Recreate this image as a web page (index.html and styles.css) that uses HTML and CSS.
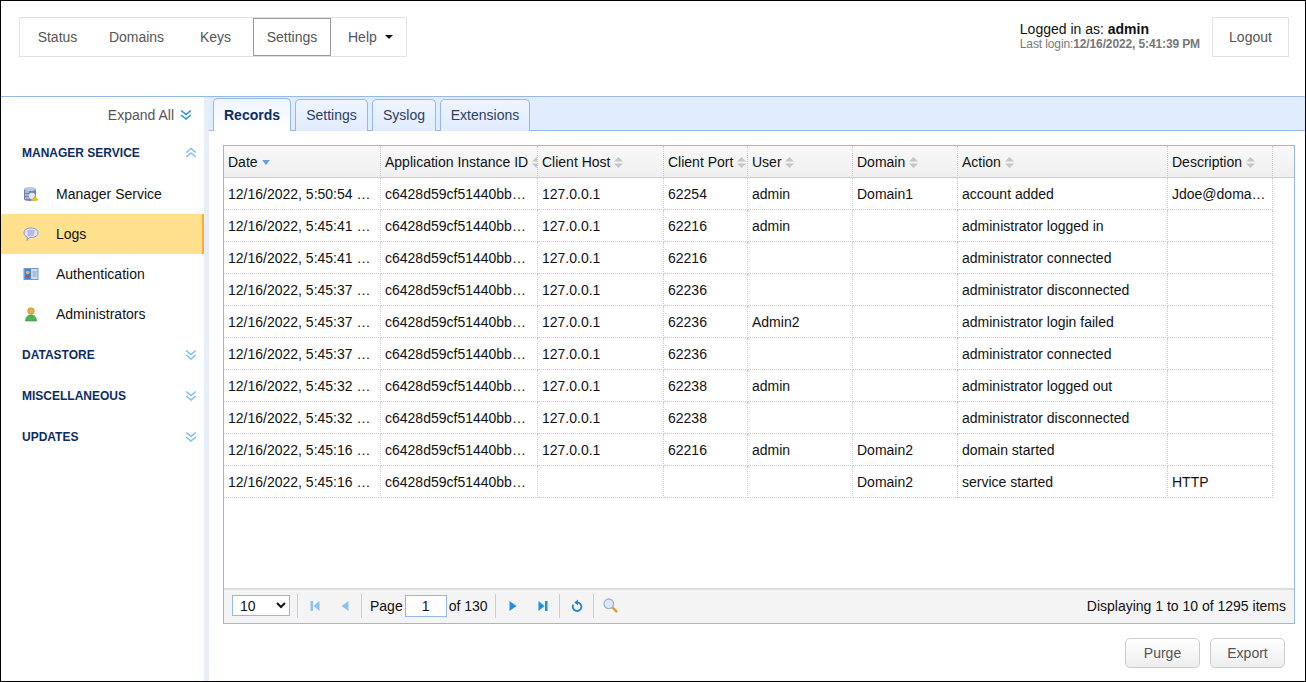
FILE: index.html
```html
<!DOCTYPE html>
<html lang="en">
<head>
<meta charset="utf-8">
<title>Logs</title>
<link rel="stylesheet" href="styles.css">
</head>
<body>
<div class="app">
  <header class="top">
    <nav class="nav">
      <a class="nav-item w-status">Status</a>
      <a class="nav-item w-domains">Domains</a>
      <a class="nav-item w-keys">Keys</a>
      <a class="nav-item w-settings is-current">Settings</a>
      <a class="nav-item w-help">Help<span class="caret"></span></a>
    </nav>
    <div class="account">
      <div class="who">
        <div class="who-line">Logged in as: <b>admin</b></div>
        <div class="last-line">Last login:<b>12/16/2022, 5:41:39 PM</b></div>
      </div>
      <a class="logout">Logout</a>
    </div>
  </header>
  <div class="body">
    <aside class="side">
      <div class="expand">Expand All
        <svg width="12" height="12" viewBox="0 0 12 12"><path d="M1.200 1.500 6 5.500l4.800-4M1.200 6 6 10l4.800-4" fill="none" stroke="#2c8fe0" stroke-width="1.600"/></svg>
      </div>
      <div class="sec sec-first">MANAGER SERVICE
        <svg width="12" height="12" viewBox="0 0 12 12"><path d="M1.200 5.500 6 1.500l4.800 4M1.200 10 6 6l4.800 4" fill="none" stroke="#7fbdf0" stroke-width="1.500"/></svg>
      </div>
      <a class="side-item">
        <svg class="side-icon" width="16" height="16" viewBox="0 0 16 16"><path d="M1 3v10c0 1 2 2 6 2s6-1 6-2V3z" fill="#6f86b4"/><ellipse cx="7" cy="3" rx="6" ry="2" fill="#bcc8e0"/><path d="M2 6h4M2 9h4M2 12h4" stroke="#dfe7f5"/><circle cx="9" cy="10" r="3.200" fill="#e3e8f1"/><path d="M8 14.500l3.500-4.500 4 3.500-2 1.500z" fill="#e6bf25"/></svg>
        Manager Service</a>
      <a class="side-item is-active">
        <svg class="side-icon" width="16" height="16" viewBox="0 0 16 16"><path d="M8 2c4 0 7 1.800 7 4.800S12 11.500 8 11.500H6.500L4 14.500l.4-3.500C2.200 10.400 1 8.900 1 6.800 1 3.800 4 2 8 2z" fill="#dfe2f8" stroke="#9096d6"/><path d="M4.500 5h7M4.500 7h7M4.500 9h6" stroke="#8c92d2"/></svg>
        Logs</a>
      <a class="side-item">
        <svg class="side-icon" width="16" height="16" viewBox="0 0 16 16"><rect x="1" y="2.500" width="14" height="11" fill="#cfdcf0" stroke="#6f9bd0"/><rect x="1.500" y="3" width="6.500" height="10" fill="#3f86d8"/><circle cx="4.700" cy="6.500" r="1.800" fill="#f0b070"/><path d="M2.500 11.500c0-2 1-3 2.200-3s2.200 1 2.200 3z" fill="#c0503a"/><path d="M9.500 6h4M9.500 8h4M9.500 10h4" stroke="#8e9cb4"/></svg>
        Authentication</a>
      <a class="side-item">
        <svg class="side-icon" width="16" height="16" viewBox="0 0 16 16"><circle cx="8" cy="5" r="3.300" fill="#e4b04c" stroke="#b58632" stroke-width=".6"/><path d="M2.500 15c0-4 2.200-6 5.500-6s5.500 2 5.500 6z" fill="#4cb64c" stroke="#2f8f35" stroke-width=".6"/></svg>
        Administrators</a>
      <div class="sec">DATASTORE
        <svg width="12" height="12" viewBox="0 0 12 12"><path d="M1.200 1.500 6 5.500l4.800-4M1.200 6 6 10l4.800-4" fill="none" stroke="#7fbdf0" stroke-width="1.500"/></svg>
      </div>
      <div class="sec">MISCELLANEOUS
        <svg width="12" height="12" viewBox="0 0 12 12"><path d="M1.200 1.500 6 5.500l4.800-4M1.200 6 6 10l4.800-4" fill="none" stroke="#7fbdf0" stroke-width="1.500"/></svg>
      </div>
      <div class="sec">UPDATES
        <svg width="12" height="12" viewBox="0 0 12 12"><path d="M1.200 1.500 6 5.500l4.800-4M1.200 6 6 10l4.800-4" fill="none" stroke="#7fbdf0" stroke-width="1.500"/></svg>
      </div>
    </aside>
    <main class="main">
      <div class="tabs">
        <a class="tab w-records is-open">Records</a>
        <a class="tab w-tset">Settings</a>
        <a class="tab w-syslog">Syslog</a>
        <a class="tab w-ext">Extensions</a>
      </div>
      <div class="panel">
        <section class="grid">
          <div class="grid-view">
            <table class="table">
              <colgroup>
                <col class="c1"><col class="c2"><col class="c3"><col class="c4"><col class="c5"><col class="c6"><col class="c7"><col class="c8"><col>
              </colgroup>
              <thead>
                <tr>
                  <th>Date <svg class="sort-active" width="8" height="5" viewBox="0 0 8 5"><path d="M0 0h8L4 5z" fill="#6d9fd8"/></svg></th>
                  <th>Application Instance ID <svg class="sort" width="9" height="11" viewBox="0 0 9 11"><path d="M4.500 0 9 4.500H0zM0 6.500h9L4.500 11z" fill="#c6c6c6"/></svg></th>
                  <th>Client Host <svg class="sort" width="9" height="11" viewBox="0 0 9 11"><path d="M4.500 0 9 4.500H0zM0 6.500h9L4.500 11z" fill="#c6c6c6"/></svg></th>
                  <th>Client Port <svg class="sort" width="9" height="11" viewBox="0 0 9 11"><path d="M4.500 0 9 4.500H0zM0 6.500h9L4.500 11z" fill="#c6c6c6"/></svg></th>
                  <th>User <svg class="sort" width="9" height="11" viewBox="0 0 9 11"><path d="M4.500 0 9 4.500H0zM0 6.500h9L4.500 11z" fill="#c6c6c6"/></svg></th>
                  <th>Domain <svg class="sort" width="9" height="11" viewBox="0 0 9 11"><path d="M4.500 0 9 4.500H0zM0 6.500h9L4.500 11z" fill="#c6c6c6"/></svg></th>
                  <th>Action <svg class="sort" width="9" height="11" viewBox="0 0 9 11"><path d="M4.500 0 9 4.500H0zM0 6.500h9L4.500 11z" fill="#c6c6c6"/></svg></th>
                  <th>Description <svg class="sort" width="9" height="11" viewBox="0 0 9 11"><path d="M4.500 0 9 4.500H0zM0 6.500h9L4.500 11z" fill="#c6c6c6"/></svg></th>
                  <th class="filler"></th>
                </tr>
              </thead>
              <tbody>
                <tr><td>12/16/2022, 5:50:54 PM</td><td>c6428d59cf51440bb7a1</td><td>127.0.0.1</td><td>62254</td><td>admin</td><td>Domain1</td><td>account added</td><td>Jdoe@domain1.com</td></tr>
                <tr><td>12/16/2022, 5:45:41 PM</td><td>c6428d59cf51440bb7a1</td><td>127.0.0.1</td><td>62216</td><td>admin</td><td></td><td>administrator logged in</td><td></td></tr>
                <tr><td>12/16/2022, 5:45:41 PM</td><td>c6428d59cf51440bb7a1</td><td>127.0.0.1</td><td>62216</td><td></td><td></td><td>administrator connected</td><td></td></tr>
                <tr><td>12/16/2022, 5:45:37 PM</td><td>c6428d59cf51440bb7a1</td><td>127.0.0.1</td><td>62236</td><td></td><td></td><td>administrator disconnected</td><td></td></tr>
                <tr><td>12/16/2022, 5:45:37 PM</td><td>c6428d59cf51440bb7a1</td><td>127.0.0.1</td><td>62236</td><td>Admin2</td><td></td><td>administrator login failed</td><td></td></tr>
                <tr><td>12/16/2022, 5:45:37 PM</td><td>c6428d59cf51440bb7a1</td><td>127.0.0.1</td><td>62236</td><td></td><td></td><td>administrator connected</td><td></td></tr>
                <tr><td>12/16/2022, 5:45:32 PM</td><td>c6428d59cf51440bb7a1</td><td>127.0.0.1</td><td>62238</td><td>admin</td><td></td><td>administrator logged out</td><td></td></tr>
                <tr><td>12/16/2022, 5:45:32 PM</td><td>c6428d59cf51440bb7a1</td><td>127.0.0.1</td><td>62238</td><td></td><td></td><td>administrator disconnected</td><td></td></tr>
                <tr><td>12/16/2022, 5:45:16 PM</td><td>c6428d59cf51440bb7a1</td><td>127.0.0.1</td><td>62216</td><td>admin</td><td>Domain2</td><td>domain started</td><td></td></tr>
                <tr><td>12/16/2022, 5:45:16 PM</td><td>c6428d59cf51440bb7a1</td><td></td><td></td><td></td><td>Domain2</td><td>service started</td><td>HTTP</td></tr>
              </tbody>
            </table>
          </div>
          <div class="pager">
            <select class="page-size"><option>10</option><option>20</option><option>50</option></select>
            <span class="sep"></span>
            <span class="pg-cell dim"><svg width="10" height="12" viewBox="0 0 10 12"><path d="M.5 1H3v10H.5zM9.500 1v10L3.500 6z" fill="#2a93e6"/></svg></span>
            <span class="pg-cell dim"><svg width="8" height="12" viewBox="0 0 8 12"><path d="M7.500 1v10L.5 6z" fill="#2a93e6"/></svg></span>
            <span class="sep"></span>
            <span class="pg-label">Page</span>
            <input class="pg-input" value="1">
            <span class="pg-label">of 130</span>
            <span class="sep"></span>
            <span class="pg-cell"><svg width="8" height="12" viewBox="0 0 8 12"><path d="M.5 1v10l7-5z" fill="#1e8fe6"/></svg></span>
            <span class="pg-cell"><svg width="10" height="12" viewBox="0 0 10 12"><path d="M.5 1v10l6-5zM7 1h2.500v10H7z" fill="#1e8fe6"/></svg></span>
            <span class="sep"></span>
            <span class="pg-cell"><svg width="12" height="13" viewBox="0 0 12 13"><path d="M6.500 3.400A4.300 4.300 0 1 1 2.300 5.600" fill="none" stroke="#1e84d8" stroke-width="1.800"/><path d="M7 .4v6L3.300 3.400z" fill="#1e84d8"/></svg></span>
            <span class="sep"></span>
            <span class="pg-cell"><svg width="15" height="15" viewBox="0 0 15 15"><circle cx="5.800" cy="5.800" r="4.800" fill="#dce8f6" stroke="#a3b2c4" stroke-width="1.300"/><path d="M9.500 9.500l4.600 4.600" stroke="#e09a30" stroke-width="2.400"/></svg></span>
            <span class="pg-info">Displaying 1 to 10 of 1295 items</span>
          </div>
        </section>
        <div class="actions">
          <a class="btn">Purge</a>
          <a class="btn">Export</a>
        </div>
      </div>
    </main>
  </div>
</div>
</body>
</html>
```
FILE: styles.css
```css
* { box-sizing: border-box; }
html, body { margin: 0; height: 100%; }
body { font-family: "Liberation Sans", Arial, sans-serif; font-size: 14px; color: #111; background: #fff; overflow: hidden; }
.app { width: 1306px; height: 682px; border: 1px solid #000; display: flex; flex-direction: column; overflow: hidden; }

.top { height: 96px; flex: none; border-bottom: 1px solid #95b8e7; display: flex; justify-content: space-between; align-items: flex-start; padding: 16px 16px 0 18px; }
.nav { display: flex; height: 40px; border: 1px solid #e2e2e2; }
.nav-item { display: flex; align-items: center; justify-content: center; color: #555; height: 38px; }
.w-status { width: 75px; }
.w-domains { width: 83px; }
.w-keys { width: 75px; }
.w-settings { width: 78px; border: 1px solid #999; }
.w-help { width: 75px; justify-content: flex-start; padding-left: 17px; }
.caret { display: inline-block; width: 0; height: 0; margin-left: 8px; border: 4px solid transparent; border-top: 4px solid #111; border-bottom: 0; }

.account { display: flex; align-items: flex-start; gap: 12px; }
.who { padding-top: 5px; }
.who-line { font-size: 14px; line-height: 15px; color: #111; }
.last-line { font-size: 12px; letter-spacing: -.12px; line-height: 14px; color: #777; }
.logout { display: flex; align-items: center; justify-content: center; width: 77px; height: 40px; border: 1px solid #e2e2e2; color: #555; }

.body { flex: 1; display: flex; min-height: 0; }
.side { width: 208px; flex: none; border-right: 5px solid #e6eef8; }
.expand { height: 35px; display: flex; align-items: center; justify-content: flex-end; gap: 6px; padding-right: 12px; color: #555; }
.sec { height: 41px; display: flex; align-items: center; justify-content: space-between; padding: 0 7px 0 21px; font-size: 12px; font-weight: 700; color: #0e2d5f; }
.sec-first { height: 42px; }
.side-item { height: 40px; display: flex; align-items: center; padding-left: 22px; gap: 17px; color: #111; }
.side-icon { flex: none; }
.is-active { background: #ffe08c; border-right: 2px solid #ffab3f; }

.main { flex: 1; min-width: 0; display: flex; flex-direction: column; }
.tabs { height: 34px; flex: none; display: flex; align-items: flex-end; gap: 4px; padding: 2px 0 0 4px; background: #e0ecff; border-bottom: 1px solid #95b8e7; }
.tab { height: 32px; padding-bottom: 1px; display: flex; align-items: center; justify-content: center; color: #2d3f5f; border: 1px solid #95b8e7; border-bottom: 0; border-radius: 5px 5px 0 0; background: linear-gradient(#eff5ff, #e0ecff); margin-bottom: -1px; }
.w-records { width: 78px; }
.w-tset { width: 73px; }
.w-syslog { width: 64px; }
.w-ext { width: 90px; }
.is-open { font-weight: 700; color: #0e2d5f; background: linear-gradient(#eff5ff, #fff); height: 33px; padding-bottom: 0; }

.panel { flex: 1; display: flex; flex-direction: column; padding: 14px 10px 0 14px; min-height: 0; }
.grid { height: 479px; flex: none; border: 1px solid #95b8e7; display: flex; flex-direction: column; }
.grid-view { flex: 1; min-height: 0; }
.table { width: 100%; table-layout: fixed; border-collapse: separate; border-spacing: 0; }
.c1, .c2 { width: 157px; }
.c3 { width: 126px; }
.c4 { width: 84px; }
.c5, .c6 { width: 105px; }
.c7 { width: 210px; }
.c8 { width: 105px; }
th, td { padding: 0 4px; font-size: 14px; font-weight: 400; text-align: left; white-space: nowrap; overflow: hidden; text-overflow: ellipsis; border-right: 1px dotted #ccc; color: #111; }
th { height: 32px; background: linear-gradient(#f9f9f9, #efefef); border-bottom: 1px solid #ccc; text-overflow: clip; }
th.filler { border-right: 0; }
td { height: 32px; border-bottom: 1px dotted #ccc; color: #111; }
.sort { vertical-align: -1px; }
.sort-active { margin-left: 1px; vertical-align: 2px; }
.pager { height: 35px; flex: none; display: flex; align-items: center; background: #f4f4f4; border-top: 2px solid #ddd; padding: 0 8px 2px; }
.page-size { width: 58px; height: 21px; font: 14px "Liberation Sans", Arial, sans-serif; color: #111; background: #fff; border: 1px solid #95b8e7; border-radius: 0; padding: 0 3px; }
.sep { width: 1px; height: 24px; margin: 0 2px 0 1px; background: #ccc; flex: none; }
.page-size + .sep { margin-left: 7px; }
.pg-cell { width: 30px; flex: none; display: flex; justify-content: center; align-items: center; }
.dim { opacity: .5; }
.pg-label { color: #111; }
.sep + .pg-label { margin-left: 6px; }
.pg-input { width: 42px; height: 22px; margin: 0 2px; border: 1px solid #95b8e7; text-align: center; font: 14px "Liberation Sans", Arial, sans-serif; color: #111; padding: 0; outline: 0; }
.pg-input + .pg-label { margin-right: 6px; }
.pg-info { margin-left: auto; color: #111; }

.actions { flex: 1; display: flex; justify-content: flex-end; gap: 10px; padding: 14px 10px 0 0; }
.btn { width: 75px; height: 30px; display: flex; align-items: center; justify-content: center; border: 1px solid #ccc; border-radius: 5px; background: linear-gradient(#fff, #eee); color: #555; }
```
